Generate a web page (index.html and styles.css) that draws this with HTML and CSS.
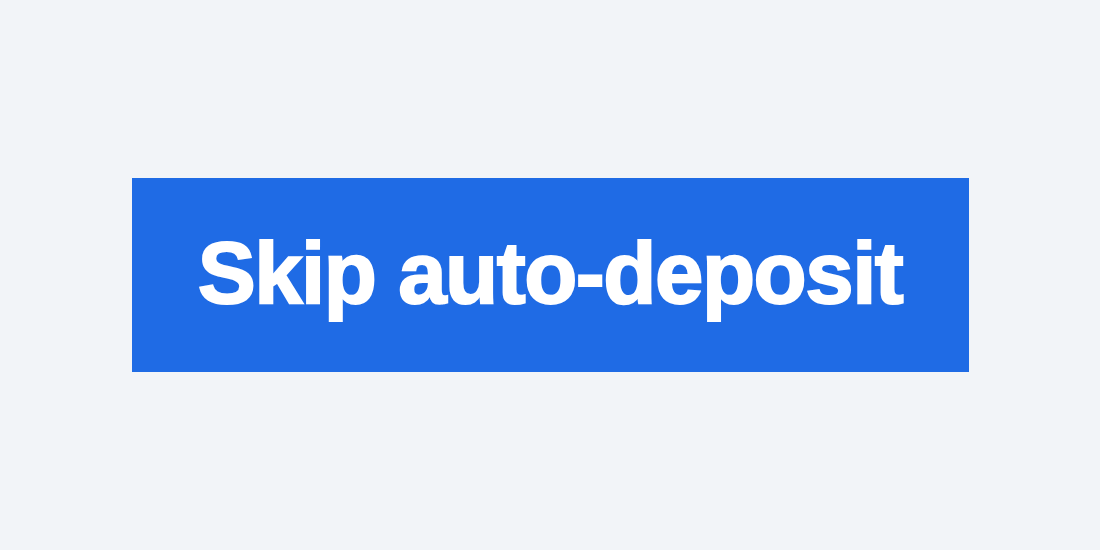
FILE: index.html
```html
<!DOCTYPE html>
<html lang="en">
<head>
    <meta charset="UTF-8">
    <meta name="viewport" content="width=device-width, initial-scale=1.0">
    <title>Skip auto-deposit</title>
    <link rel="stylesheet" href="styles.css">
</head>
<body>

<div class="page">
    <button type="button" class="skip-button">Skip auto-deposit</button>
</div>

</body>
</html>
```

FILE: styles.css
```css
html, body { margin: 0; padding: 0; }
body { background-color: #f2f4f8; font-family: "Liberation Sans", Arial, sans-serif; }
.page { height: 100vh; display: flex; align-items: center; justify-content: center; }
.skip-button { box-sizing: border-box; display: flex; align-items: center; justify-content: center; width: 837px; height: 194px; padding: 0 0 5px 0; margin: 0; border: none; border-radius: 0; background-color: #1f6be5; color: #ffffff; font-family: inherit; font-size: 87px; font-weight: bold; letter-spacing: -0.017em; line-height: 1; -webkit-text-stroke: 2px #ffffff; cursor: pointer; }
```
